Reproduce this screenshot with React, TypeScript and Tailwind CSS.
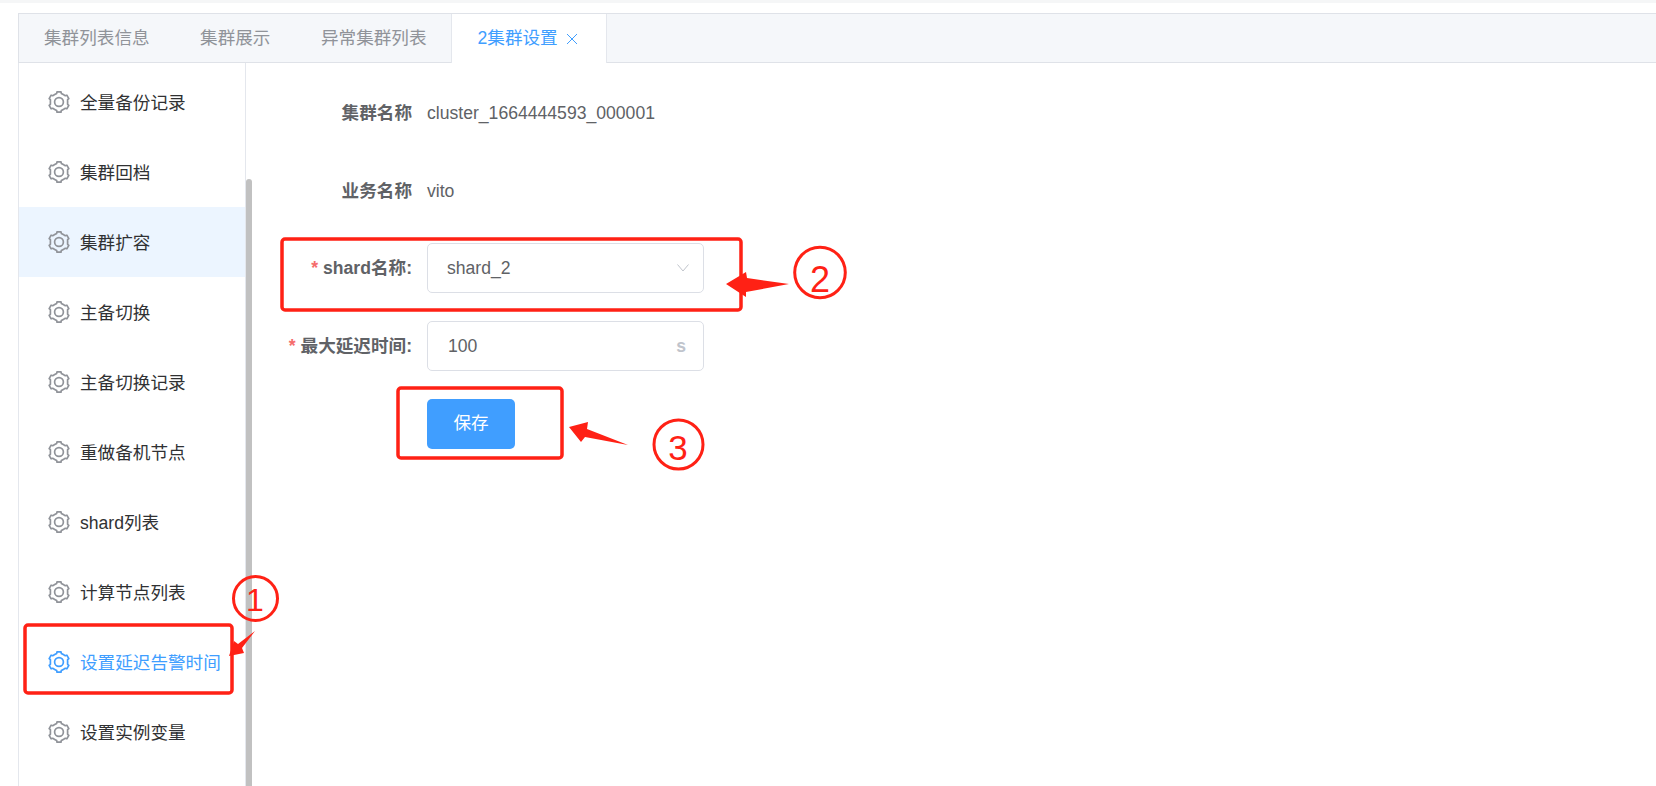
const font = "font-['Liberation_Sans','Noto_Sans_CJK_SC',sans-serif]";

const menus = [
    "全量备份记录",
    "集群回档",
    "集群扩容",
    "主备切换",
    "主备切换记录",
    "重做备机节点",
    "shard列表",
    "计算节点列表",
    "设置延迟告警时间",
    "设置实例变量",
];

// six shallow teeth around the centre of a 24 box
const gearPoints = [0, 1, 2, 3, 4, 5]
    .flatMap((k) => {
        const a = 90 + 60 * k;
        return [
            [a - 30, 8.6],
            [a - 15, 8.9],
            [a - 11, 10.4],
            [a + 11, 10.4],
            [a + 15, 8.9],
        ];
    })
    .map(([a, r]) => {
        const rad = (a * Math.PI) / 180;
        return `${(12 + r * Math.cos(rad)).toFixed(2)},${(12 - r * Math.sin(rad)).toFixed(2)}`;
    })
    .join(" ");

const GearIcon = ({ className }: { className: string }) => (
    <svg viewBox="0 0 24 24" fill="none" stroke="currentColor" strokeWidth="1.7" strokeLinejoin="round" className={className}>
        <polygon points={gearPoints} />
        <circle cx="12" cy="12" r="4.4" />
    </svg>
);

// red marks drawn on top of the screenshot
const Annotations = () => (
    <svg viewBox="0 0 1656 786" className="absolute inset-0 w-[1656px] h-[786px] pointer-events-none">
        <g fill="none" stroke="#ff2115" strokeWidth="3.5">
            <rect x="25" y="625" width="207" height="68" rx="3" />
            <rect x="282" y="239" width="459" height="71" rx="3" />
            <rect x="398" y="388" width="164" height="70" rx="3" />
        </g>
        <g fill="none" stroke="#ff2115" strokeWidth="3">
            <circle cx="255.5" cy="598.5" r="22" />
            <circle cx="820" cy="272.5" r="25.3" />
            <circle cx="678.5" cy="444.5" r="24.5" />
        </g>
        <g fill="#ff2115">
            <polygon points="255,631 242,648 244,653 229,656 234,641 238,644" />
            <polygon points="789,284 747,278 746,272 726,284 746,297 746,292" />
            <polygon points="628,445 587,429 588,422 569,427 581,442 585,437" />
            <text x="255" y="611" textAnchor="middle" fontSize="32" fontFamily="Liberation Sans">1</text>
            <text x="820" y="292" textAnchor="middle" fontSize="36" fontFamily="Liberation Sans">2</text>
            <text x="678" y="460" textAnchor="middle" fontSize="35" fontFamily="Liberation Sans">3</text>
        </g>
    </svg>
);

const App = () => {
    return (
        <div className={`${font} relative h-[786px] w-full overflow-hidden bg-white text-[17.6px]`}>
            <div className="h-[3px] bg-[#f5f6f7]" />
            <div className="ml-[18px] mt-[10px] flex h-[50px] border-t border-l border-b border-[#dfe2e8] bg-[#f5f7fa] text-[#909399]">
                <div className="flex items-center pl-[25px] pr-[25px]">集群列表信息</div>
                <div className="flex items-center px-[25.5px]">集群展示</div>
                <div className="flex items-center pl-[25px] pr-[24px]">异常集群列表</div>
                <div className="-mb-px flex w-[156px] items-center border-x border-[#e4e7ed] bg-white pl-[26px] text-[#409eff]">
                    2集群设置
                    <svg viewBox="0 0 12 12" fill="none" stroke="currentColor" strokeWidth="1" className="ml-[8px] h-[12px] w-[12px]">
                        <path d="M1 1l10 10M11 1L1 11" />
                    </svg>
                </div>
            </div>
            <div className="ml-[18px] flex h-[723px]">
                <div className="w-[228px] shrink-0 overflow-hidden border-x border-[#e4e7ed] pt-[4px] text-[#303133]">
                    {menus.map((m, i) => (
                        <div
                            key={m}
                            className={`flex h-[70px] items-center pl-[28px] ${i === 2 ? "bg-[#ecf5ff]" : ""} ${i === 8 ? "text-[#409eff]" : ""}`}
                        >
                            <GearIcon className={`mr-[9px] h-[24px] w-[24px] shrink-0 ${i === 8 ? "text-[#409eff]" : "text-[#909399]"}`} />
                            <span className="pt-[2px]">{m}</span>
                        </div>
                    ))}
                </div>
                <div className="w-[6px] shrink-0 pt-[116px]">
                    <div className="h-full rounded-t-[3px] bg-[#c1c1c1]" />
                </div>
                <div className="flex flex-1 flex-col gap-[28px] pt-[25px] text-[#606266]">
                    <div className="flex h-[50px] items-center">
                        <label className="w-[160px] text-right font-bold">集群名称</label>
                        <span className="ml-[15px]">cluster_1664444593_000001</span>
                    </div>
                    <div className="flex h-[50px] items-center">
                        <label className="w-[160px] text-right font-bold">业务名称</label>
                        <span className="ml-[15px]">vito</span>
                    </div>
                    <div className="-mt-px flex h-[50px] items-center">
                        <label className="w-[160px] text-right font-bold">
                            <span className="mr-[5px] text-[#f56c6c]">*</span>shard名称:
                        </label>
                        <div className="ml-[15px] flex h-[50px] w-[277px] items-center justify-between rounded-[5px] border border-[#dcdfe6] pl-[19px] pr-[14px]">
                            shard_2
                            <svg viewBox="0 0 12 8" fill="none" stroke="#c0c4cc" strokeWidth="1" className="h-[8px] w-[12px]">
                                <path d="M.5.5L6 7l5.5-6.5" />
                            </svg>
                        </div>
                    </div>
                    <div className="flex h-[50px] items-center">
                        <label className="w-[160px] text-right font-bold">
                            <span className="mr-[5px] text-[#f56c6c]">*</span>最大延迟时间:
                        </label>
                        <div className="ml-[15px] flex h-[50px] w-[277px] items-center justify-between rounded-[5px] border border-[#dcdfe6] pl-[20px] pr-[17px]">
                            100
                            <span className="font-bold text-[#c0c4cc]">s</span>
                        </div>
                    </div>
                    <div className="flex">
                        <button className="ml-[175px] h-[50px] w-[88px] rounded-[5px] bg-[#409eff] pb-[2px] text-white">保存</button>
                    </div>
                </div>
            </div>
            <Annotations />
        </div>
    );
};

export default App;
